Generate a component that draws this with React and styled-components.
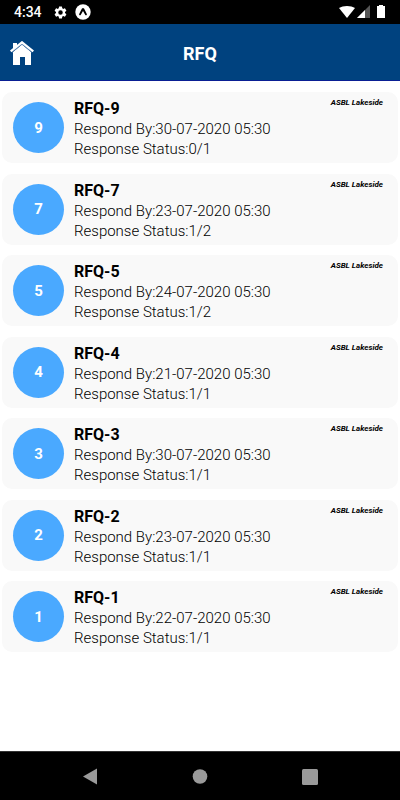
import React from "react";
import styled, { createGlobalStyle } from "styled-components";

const GlobalStyle = createGlobalStyle`
  *, *::before, *::after { box-sizing: border-box; }
  body {
    margin: 0;
    background: #ffffff;
    color: #000000;
    font-family: Roboto, "Liberation Sans", sans-serif;
  }
`;

const Screen = styled.div`
  display: flex;
  flex-direction: column;
  min-height: 100vh;
`;

const StatusBar = styled.div`
  display: flex;
  align-items: center;
  justify-content: space-between;
  height: 24px;
  padding: 0 15px 0 14px;
  background: #000000;
  color: #ffffff;
`;

const StatusGroup = styled.div`
  display: flex;
  align-items: center;
  gap: ${(p) => p.$gap}px;
  svg { display: block; }
`;

const Clock = styled.time`
  margin-right: 4px;
  font-size: 14px;
  line-height: 24px;
  font-weight: 500;
`;

const Header = styled.header`
  display: grid;
  grid-template-columns: 40px 1fr 40px;
  align-items: center;
  height: 57px;
  padding-top: 3px;
  background: #00427f;
  border-bottom: 1px solid #0a1f94;
  color: #ffffff;
`;

const IconButton = styled.button`
  display: flex;
  align-items: center;
  justify-content: center;
  padding: ${(p) => p.$padding || "0"};
  border: 0;
  background: transparent;
  cursor: pointer;
`;

const Title = styled.h1`
  margin: 0;
  font-size: 18px;
  line-height: 24px;
  font-weight: 700;
  text-align: center;
`;

const List = styled.ul`
  display: flex;
  flex: 1;
  flex-direction: column;
  justify-content: space-between;
  margin: 0;
  padding: 11px 2px 99px;
  list-style: none;
`;

const Card = styled.li`
  display: flex;
  align-items: center;
  gap: 10px;
  height: 71px;
  padding: 0 15px 0 11px;
  border-radius: 10px;
  background: #f9f9f9;
`;

const Badge = styled.div`
  display: flex;
  flex: none;
  align-items: center;
  justify-content: center;
  width: 51px;
  height: 51px;
  border-radius: 50%;
  background: #4aa9ff;
  color: #ffffff;
  font-size: 15px;
  font-weight: 700;
`;

const Details = styled.div`
  flex: 1;
  padding-top: 2px;
`;

const Name = styled.h2`
  margin: 0;
  font-size: 16px;
  line-height: 21px;
  font-weight: 700;
`;

const Line = styled.p`
  margin: 0;
  font-size: 15px;
  line-height: 20px;
  font-weight: 300;
`;

const Project = styled.span`
  align-self: flex-start;
  margin-top: 6px;
  font-size: 8px;
  line-height: 10px;
  font-weight: 700;
  font-style: italic;
`;

const NavBar = styled.nav`
  display: flex;
  align-items: center;
  justify-content: center;
  gap: 62px;
  height: 49px;
  border-top: 1px solid #333333;
  background: #000000;
`;

const NavButton = styled(IconButton)`
  width: 48px;
  height: 48px;
`;

const rfqs = [
  { id: 9, respondBy: "30-07-2020 05:30", status: "0/1" },
  { id: 7, respondBy: "23-07-2020 05:30", status: "1/2" },
  { id: 5, respondBy: "24-07-2020 05:30", status: "1/2" },
  { id: 4, respondBy: "21-07-2020 05:30", status: "1/1" },
  { id: 3, respondBy: "30-07-2020 05:30", status: "1/1" },
  { id: 2, respondBy: "23-07-2020 05:30", status: "1/1" },
  { id: 1, respondBy: "22-07-2020 05:30", status: "1/1" },
];

const GearIcon = () => (
  <svg width="15" height="15" viewBox="0 0 24 24" fill="#ffffff" aria-hidden="true">
    <path d="M19.14 12.94c.04-.3.06-.61.06-.94s-.02-.64-.07-.94l2.03-1.58a.49.49 0 0 0 .12-.61l-1.92-3.32a.49.49 0 0 0-.59-.22l-2.39.96a7 7 0 0 0-1.62-.94l-.36-2.54a.48.48 0 0 0-.48-.41h-3.84a.47.47 0 0 0-.47.41l-.36 2.54c-.59.24-1.13.57-1.62.94l-2.39-.96a.48.48 0 0 0-.59.22L2.74 8.87a.47.47 0 0 0 .12.61l2.03 1.58c-.05.3-.09.63-.09.94s.02.64.07.94l-2.03 1.58a.49.49 0 0 0-.12.61l1.92 3.32c.12.22.37.29.59.22l2.39-.96c.5.38 1.03.7 1.62.94l.36 2.54c.05.24.24.41.48.41h3.84c.24 0 .44-.17.47-.41l.36-2.54a7 7 0 0 0 1.62-.94l2.39.96c.22.08.47 0 .59-.22l1.92-3.32a.47.47 0 0 0-.12-.61zM12 15.6a3.6 3.6 0 1 1 0-7.2 3.6 3.6 0 0 1 0 7.2z" />
  </svg>
);

const ExpoIcon = () => (
  <svg width="16" height="16" viewBox="0 0 16 16" aria-hidden="true">
    <circle cx="8" cy="8" r="7.7" fill="#ffffff" />
    <path d="M7.1 4.2h1.8c1 1.8 1.9 3.9 2.9 5.8.4.9-.8 1.9-1.5 1L8 6.9 5.7 11c-.7.9-1.9-.1-1.5-1 1-1.9 1.9-4 2.9-5.8z" fill="#000000" />
  </svg>
);

const WifiIcon = () => (
  <svg width="16" height="14" viewBox="0 0 16 14" aria-hidden="true">
    <path d="M0 3C4 .2 12 .2 16 3L8 13z" fill="#ffffff" />
  </svg>
);

const SignalIcon = () => (
  <svg width="13" height="14" viewBox="0 0 13 14" aria-hidden="true">
    <path d="M13 0v13H0z" fill="#555555" />
    <path d="M8 5v8H0z" fill="#ffffff" />
  </svg>
);

const BatteryIcon = () => (
  <svg width="8" height="14" viewBox="0 0 8 14" aria-hidden="true">
    <path d="M2 0h4v1h2v12H0V1h2z" fill="#ffffff" />
  </svg>
);

const HomeIcon = () => (
  <svg width="24" height="25" viewBox="0 0 24 25" aria-hidden="true">
    <path d="M3 2h4v4L3 9z" fill="#ffffff" />
    <path d="M3 11 12 3.5l9 7.5v13h-6v-8h-5v8H3z" fill="#ffffff" />
    <path d="M2 11.3 12 3.2l10 8.100" fill="none" stroke="#5580b0" strokeWidth="1" />
    <path d="M.7 10.300 12 1.300l11.300 9" fill="none" stroke="#ffffff" strokeWidth="2.200" />
  </svg>
);

const navItems = [
  { label: "Back", shape: <path d="M1 8.5 15 .5v16z" /> },
  { label: "Home screen", shape: <circle cx="8" cy="8.5" r="7.3" /> },
  { label: "Recent apps", shape: <rect y="1" width="16" height="16" rx="1.5" /> },
];

export default function App() {
  return (
    <Screen>
      <GlobalStyle />
      <StatusBar>
        <StatusGroup $gap={7}>
          <Clock>4:34</Clock>
          <GearIcon />
          <ExpoIcon />
        </StatusGroup>
        <StatusGroup $gap={7}>
          <StatusGroup $gap={2}>
            <WifiIcon />
            <SignalIcon />
          </StatusGroup>
          <BatteryIcon />
        </StatusGroup>
      </StatusBar>
      <Header>
        <IconButton aria-label="Home" $padding="0 0 0 4px">
          <HomeIcon />
        </IconButton>
        <Title>RFQ</Title>
      </Header>
      <List>
        {rfqs.map((rfq) => (
          <Card key={rfq.id}>
            <Badge>{rfq.id}</Badge>
            <Details>
              <Name>RFQ-{rfq.id}</Name>
              <Line>Respond By:{rfq.respondBy}</Line>
              <Line>Response Status:{rfq.status}</Line>
            </Details>
            <Project>ASBL Lakeside</Project>
          </Card>
        ))}
      </List>
      <NavBar aria-label="System">
        {navItems.map((item) => (
          <NavButton key={item.label} aria-label={item.label}>
            <svg width="16" height="17" viewBox="0 0 16 17" fill="#9a9a9a" aria-hidden="true">
              {item.shape}
            </svg>
          </NavButton>
        ))}
      </NavBar>
    </Screen>
  );
}
